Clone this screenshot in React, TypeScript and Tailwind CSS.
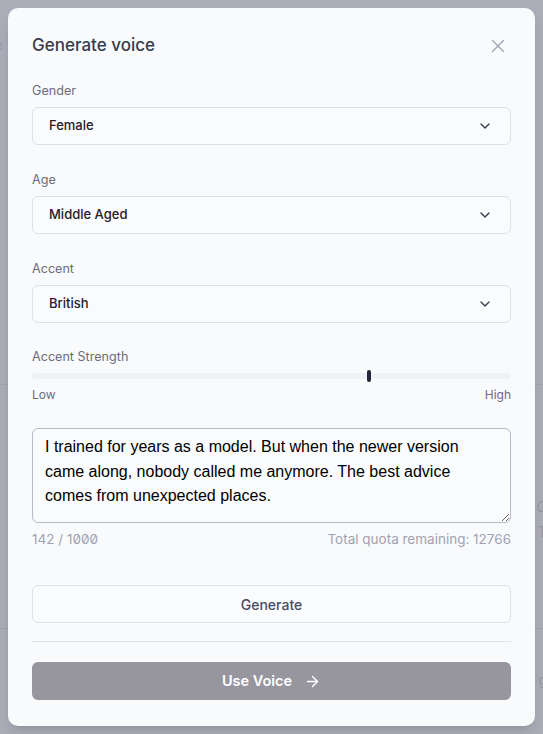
import { ChevronDown, X, ArrowRight } from "lucide-react";

const font = { fontFamily: "Inter, 'Noto Sans', sans-serif" };

function Select({ value }: { value: string }) {
  return (
    <div className="flex h-[38px] items-center justify-between rounded-md border border-[#dfdfe8] bg-[#fafbfc] pl-4 pr-[17px]">
      <span className="text-[13px] font-medium text-[#20202e]">{value}</span>
      <ChevronDown size={16} strokeWidth={2} className="text-[#3a3a4a]" />
    </div>
  );
}

function Field({ label, value }: { label: string; value: string }) {
  return (
    <div className="flex flex-col">
      <label className="mb-[6px] text-[12.6px] leading-5 text-[#6c6c7c]">{label}</label>
      <Select value={value} />
    </div>
  );
}

export default function App() {
  return (
    <div className="relative h-[734px] w-[543px] overflow-hidden bg-[#abacb7]" style={font}>
      {/* page behind the overlay */}
      <div className="flex flex-col text-[14px] text-[#9697a5]">
        <div className="-mx-[14px] mt-[34px] flex justify-between">
          <span>ne</span>
          <span>e</span>
        </div>
        <div className="-mx-[12px] mt-[201px] flex justify-between">
          <span>rs</span>
          <span>bl</span>
        </div>
        <div className="-mx-[10px] mt-[6px] flex justify-between">
          <span>a</span>
          <span>a</span>
        </div>
        <div className="mt-[80px] h-px bg-[#a1a2ae]" />
        <div className="-mx-[4px] mt-[111px] flex justify-end">
          <span>G</span>
        </div>
        <div className="-mx-[4px] mt-[4px] flex justify-end">
          <span>T</span>
        </div>
        <div className="mt-[86px] h-px bg-[#a1a2ae]" />
        <div className="-mx-[4px] mt-[40px] flex justify-end">
          <span>g</span>
        </div>
        <div className="mt-[8px] pl-[80px]">This voice has a total of 5 samples.</div>
      </div>

      {/* modal */}
      <div className="absolute inset-x-2 top-2 flex h-[718px] flex-col rounded-[10px] bg-[#f9fafb] px-6 pt-[24px] shadow-lg">
        <div className="flex h-7 items-center justify-between">
          <h2 className="text-[17px] font-medium text-[#3a3a4d]">Generate voice</h2>
          <X size={22} strokeWidth={1.5} className="mr-[2px] text-[#a3a3b2]" />
        </div>

        <div className="mt-[21px] flex flex-col gap-[25px]">
          <Field label="Gender" value="Female" />
          <Field label="Age" value="Middle Aged" />
          <Field label="Accent" value="British" />
        </div>

        <div className="mt-[24px] flex flex-col">
          <label className="text-[12.6px] leading-5 text-[#6c6c7c]">Accent Strength</label>
          <div className="relative mt-[6px] h-[6px] rounded-full bg-[#f0f1f6]">
            <div className="absolute left-[70%] top-[-3px] h-3 w-1 rounded-full bg-[#24243a]" />
          </div>
          <div className="mt-[8px] flex justify-between text-[12px] leading-4 text-[#6c6c7c]">
            <span>Low</span>
            <span>High</span>
          </div>
        </div>

        <textarea
          className="mt-[25px] h-[95px] w-full resize-y rounded-md border border-[#b9b9ca] bg-[#fafbfc] px-3 pt-[6px] text-[16px] leading-[24.5px] text-black outline-none"
          style={{ fontFamily: "'Liberation Sans', Arial, sans-serif" }}
          defaultValue="I trained for years as a model. But when the newer version came along, nobody called me anymore. The best advice comes from unexpected places."
        />
        <div className="mt-[6px] flex justify-between text-[13.5px] leading-5 text-[#a2a2b2]">
          <span className="slashed-zero">142 / 1000</span>
          <span>Total quota remaining: 12766</span>
        </div>

        <button className="mt-[36px] h-[38px] w-full rounded-md border border-[#e0e0ea] bg-[#fafbfc] text-[14px] font-medium text-[#4b4b5e]">
          Generate
        </button>
        <div className="mt-[18px] h-px bg-[#e1e1ea]" />
        <button className="mt-[20px] flex h-[38px] w-full items-center justify-center gap-3 rounded-md bg-[#97969f] text-[14.5px] font-semibold text-white">
          Use Voice
          <ArrowRight size={17} strokeWidth={2} />
        </button>
      </div>
    </div>
  );
}
